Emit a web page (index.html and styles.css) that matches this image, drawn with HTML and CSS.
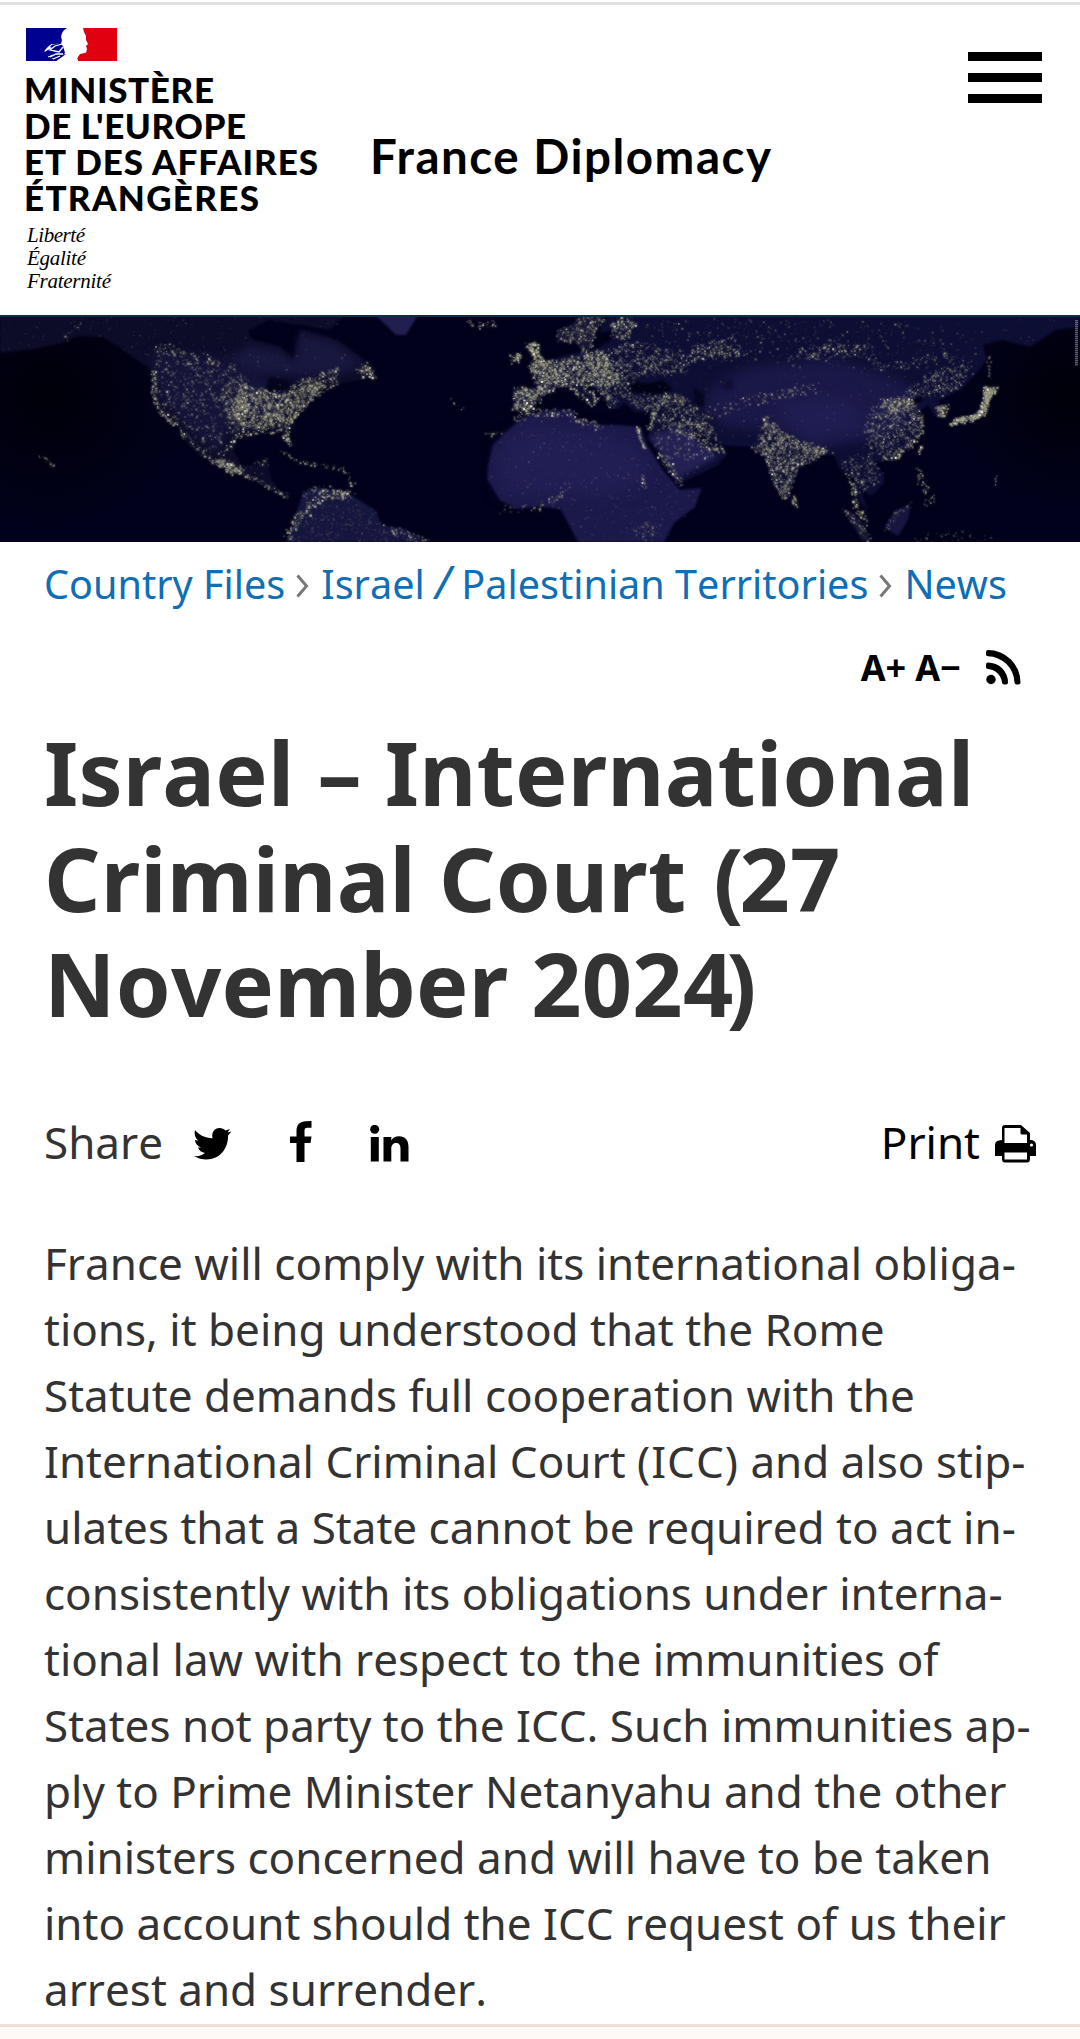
FILE: index.html
```html
<!DOCTYPE html>
<html lang="en">
<head>
    <meta charset="UTF-8">
    <meta name="viewport" content="width=device-width, initial-scale=1.0">
    <title>Israel – International Criminal Court (27 November 2024)</title>
    <link rel="stylesheet" href="styles.css">
</head>
<body>
    <header class="header">
        <svg class="logo" width="300" height="270" viewBox="0 0 300 270">
            <!-- flag -->
            <rect width="44" height="33" fill="#000091"/>
            <rect x="52" width="39" height="33" fill="#e1000f"/>
            <path fill="#fff" d="M41 0C36 3 34 8 36 12L35 16C30 15 24 16 21 20L18 24L24 21L28 19L26 23L31 24L36 21L30 26L35 27L40 26L36 29L30 33H52L51 30L55 26L60 25L61 21L60 18L62 16L60 12L60 8L58 4L57 0Z"/>
            <path fill="none" stroke="#fff" stroke-width="1" d="M20 22L26 16M22 29L27 27M26 31L33 28"/>
            <path fill="#e1000f" d="M51 31L54 26Q58 26 61 24L62 33H55Z"/>
            <path fill="#000091" d="M22 18L34 15L37 18L39 25L35 29L30 33H22L28 30L24 29L31 27L23 26L28 24L20 24L26 20Z"/>
            <path fill="none" stroke="#fff" stroke-width="1.300" d="M19 23L25 17M36 16L29 18L24 22L33 24L37 19M24 29L30 26H37M27 31L34 28"/>
            <g class="logo-name">
                <text x="-2" y="75" textLength="190">MINISTÈRE</text>
                <text x="-2" y="111" textLength="222">DE L'EUROPE</text>
                <text x="-2" y="147" textLength="294">ET DES AFFAIRES</text>
                <text x="-2" y="183" textLength="235">ÉTRANGÈRES</text>
            </g>
            <g class="logo-motto">
                <text x="1" y="214" textLength="58">Liberté</text>
                <text x="1" y="237" textLength="59">Égalité</text>
                <text x="1" y="260" textLength="84">Fraternité</text>
            </g>
        </svg>
        <svg class="site-name" width="410" height="60" viewBox="0 0 410 60">
            <text x="-2" y="45" textLength="401">France Diplomacy</text>
        </svg>
        <div class="menu">
            <span></span>
            <span></span>
            <span></span>
        </div>
    </header>

    <canvas class="banner" id="banner" width="1080" height="227"></canvas>

    <main class="content">
        <nav class="breadcrumb">
            <a>Country Files</a>
            <svg width="13" height="24" viewBox="0 0 13 24"><path d="M1.500 1.500L10.500 12L1.500 22.500"/></svg>
            <a>Israel <i>/</i> Palestinian Territories</a>
            <svg width="13" height="24" viewBox="0 0 13 24"><path d="M1.500 1.500L10.500 12L1.500 22.500"/></svg>
            <a>News</a>
        </nav>

        <div class="tools">
            <span>A+</span>
            <span>A−</span>
            <svg class="rss" width="35" height="35" viewBox="0 0 35 35">
                <circle cx="5" cy="29.500" r="4.700"/>
                <path d="M0 14.500Q0 12.500 2 12.500A20 20 0 0 1 22 32.500Q22 34.500 20 34.500H18Q16.300 34.500 16 32.500A15 15 0 0 0 2 19Q0 18.800 0 17Z"/>
                <path d="M0 2Q0 0 2 0A32.500 32.500 0 0 1 34.500 32.500Q34.500 34.500 32.500 34.500H30.500Q28.600 34.500 28.500 32.500A27 27 0 0 0 2 6.300Q0 6.200 0 4.500Z"/>
            </svg>
        </div>

        <h1>Israel – International<br>Criminal Court <span class="open">(</span>27<br>November 2024<span class="close">)</span></h1>

        <div class="share">
            <span>Share</span>
            <svg class="twitter" width="38" height="32" viewBox="0 0 38 32">
                <path d="M1 2C5 7 11 10 18.500 10.200C17.200 4.500 20.500 0 25.500 0C28 0 30 1 31.500 2.600L36 1L33.500 4.500L37.500 3.600L34 7.500C34.500 20 26 31.500 12.500 31.500C8 31.500 4 30.500 0 28C4.500 28.500 8 27.500 11 25C7.500 24.500 5 22.500 4 19.500H7C3.500 18 1.200 15.500 1 12L4.300 12.800C1 10 0 6 1 2Z"/>
            </svg>
            <svg class="facebook" width="22" height="41" viewBox="0 0 22 41">
                <path d="M21.500 0V6.800H17.500C15 6.800 14.500 8 14.500 10V15.500H21.500L20.500 22H14.500V41H6.500V22H0V15.500H6.500V10C6.500 3.500 10 .3 16 .2Z"/>
            </svg>
            <svg class="linkedin" width="39" height="37" viewBox="0 0 39 37">
                <circle cx="4.700" cy="4.300" r="4.500"/>
                <path d="M.8 12H8.800V36.500H.8ZM13.500 12H21.300V15.500C23 12.700 25.500 11.300 29 11.300C35 11.300 38.500 15 38.500 22V36.500H30.500V23.500C30.500 20 29 18 26.300 18C23.300 18 21.300 20 21.300 23.500V36.500H13.500Z"/>
            </svg>
            <a class="print">Print
                <svg width="41" height="38" viewBox="0 0 41 38">
                    <path fill-rule="evenodd" d="M7 15V3Q7 0 10 0H26L35 8V15H37Q41 16 41 20V31H35V34Q35 37.500 32 37.500H10Q7 37.500 7 34V31H0V20Q0 16 4 15.500ZM9.500 3V18H32V9.500H27Q25.500 9.500 25.500 8V3ZM9.500 27.500V34.500H32V27.500Z"/>
                    <circle cx="36.500" cy="20" r="1.600" fill="#fff"/>
                </svg>
            </a>
        </div>

        <p class="article">France will comply with its international obliga-<br>tions, it being understood that the Rome<br>Statute demands full cooperation with the<br>International Criminal Court <span class="abbr">(ICC)</span> and also stip-<br>ulates that a State cannot be required to act in-<br>consistently with its obligations under interna-<br>tional law with respect to the immunities of<br>States not party to the ICC. Such immunities ap-<br>ply to Prime Minister Netanyahu and the other<br>ministers concerned and will have to be taken<br>into account should the ICC request of us their<br>arrest and surrender.</p>
    </main>
    <footer class="footer"></footer>
    <script src="banner.js"></script>
</body>
</html>
```

FILE: styles.css
```css
body {
    margin: 0;
    height: 2039px;
    overflow: hidden;
    display: flex;
    flex-direction: column;
    background: #fff;
    color: #333;
    font-family: "Noto Sans", sans-serif;
    font-kerning: none;
}
.header {
    box-sizing: border-box;
    height: 315px;
    margin-top: 2px;
    margin-bottom: -2px;
    border-top: 3px solid #e1e1e1;
    padding: 23px 38px 0 26px;
    display: flex;
    align-items: flex-start;
}
.logo {
    overflow: visible;
}
.logo-name {
    font: 900 35px Lato, sans-serif;
}
.logo-motto {
    font: italic 21px "Liberation Serif", serif;
}
.site-name {
    margin-top: 101px;
    margin-left: 46px;
    overflow: visible;
    font: bold 47.5px Lato, sans-serif;
}
.menu {
    width: 74px;
    margin-left: auto;
    margin-top: 24px;
    display: flex;
    flex-direction: column;
    gap: 12.5px;
}
.menu span {
    height: 8.5px;
    background: #000;
}
.banner {
    display: block;
    flex: none;
    width: 1080px;
    height: 227px;
    background: #01011b;
}
.content {
    padding: 0 44px;
    height: 1482px;
    flex: none;
}
.breadcrumb {
    display: flex;
    align-items: center;
    padding-top: 12px;
    margin-bottom: 1px;
    height: 60px;
    font-size: 39.6px;
    line-height: 60px;
    white-space: nowrap;
    color: #0f6eb4;
}
.breadcrumb i {
    font-size: 45px;
    line-height: 1;
}
.breadcrumb svg {
    margin: 3px 12px 0 11px;
    fill: none;
    stroke: #777;
    stroke-width: 3;
}
.tools {
    display: flex;
    height: 105px;
    box-sizing: border-box;
    padding-top: 28px;
    justify-content: flex-end;
    font-size: 36px;
    font-weight: bold;
    line-height: 50px;
    color: #000;
}
.tools span {
    margin-right: 9px;
}
.rss {
    margin: 7px 15px 0 16px;
}
h1 {
    margin: 0;
    font-size: 88px;
    line-height: 105.6px;
    letter-spacing: 0.2px;
    white-space: nowrap;
}
h1 .open {
    margin: 0 -4px 0 4px;
}
h1 .close {
    margin-left: -7px;
}
.share {
    display: flex;
    align-items: flex-start;
    margin-top: 72px;
    font-size: 44px;
    line-height: 66px;
}
.twitter {
    margin-top: 19px;
    margin-left: 31px;
}
.facebook {
    margin-top: 12px;
    margin-left: 58px;
}
.linkedin {
    margin-top: 16px;
    margin-left: 58px;
}
.print {
    margin-left: auto;
    display: flex;
    gap: 15px;
    color: #000;
}
.print svg {
    margin-top: 16px;
}
.article {
    margin: 55px 0 0;
    font-size: 44px;
    line-height: 66px;
    white-space: nowrap;
}
.abbr {
    letter-spacing: 1px;
}
.footer {
    flex: 1;
    border-top: 3px solid #f0dfd9;
    background: #fef8f6;
}
```

FILE: banner.js
```js
// Earth at night banner
var ctx = document.getElementById('banner').getContext('2d');
var seed = 7;

function rnd() {
    seed = (seed * 16807) % 2147483647;
    return seed / 2147483647;
}

function trace(p) {
    ctx.beginPath();
    for (var i = 0; i < p.length; i += 2) ctx.lineTo(p[i], p[i + 1]);
    ctx.closePath();
}

function shape(p, color, blur) {
    ctx.filter = 'blur(' + (blur || 1.2) + 'px)';
    trace(p);
    ctx.fillStyle = color;
    ctx.fill();
    ctx.filter = 'none';
}

function dot(x, y, power) {
    var a = Math.min(1, power * (0.12 + rnd() * rnd() * 1.2));
    var s = 0.9 + rnd() * 1.3;
    // faint glow around the light
    ctx.fillStyle = 'rgba(140,140,120,' + a * 0.13 + ')';
    ctx.fillRect(x - 1.5, y - 1.5, s + 3, s + 3);
    ctx.fillStyle = 'rgba(' + (rnd() > 0.82 ? '245,245,230,' : '165,167,140,') + a + ')';
    ctx.fillRect(x, y, s, s);
}

// scatter n lights inside a polygon
function lights(p, n, power) {
    var xs = p.filter(function (v, i) { return i % 2 === 0; });
    var ys = p.filter(function (v, i) { return i % 2 === 1; });
    var x0 = Math.min.apply(null, xs), x1 = Math.max.apply(null, xs);
    var y0 = Math.min.apply(null, ys), y1 = Math.max.apply(null, ys);
    var count = 0;
    trace(p);
    for (var i = 0; i < n * 8 && count < n; i++) {
        var x = x0 + rnd() * (x1 - x0), y = y0 + rnd() * (y1 - y0);
        if (ctx.isPointInPath(x, y)) {
            dots.push([x + (rnd() - 0.5) * 4, y + (rnd() - 0.5) * 4, power]);
            count++;
        }
    }
}

// lights along a coast or a river
function line(p, step, spread, power) {
    for (var i = 0; i < p.length - 2; i += 2) {
        var dx = p[i + 2] - p[i], dy = p[i + 3] - p[i + 1];
        var n = Math.sqrt(dx * dx + dy * dy) / step;
        for (var j = 0; j < n; j++) {
            dots.push([p[i] + dx * j / n + (rnd() - 0.5) * spread, p[i + 1] + dy * j / n + (rnd() - 0.5) * spread, power]);
        }
    }
}

var dots = [];
var sea = '#01011b';

ctx.fillStyle = sea;
ctx.fillRect(0, 0, 1080, 227);
var g = ctx.createRadialGradient(50, 80, 10, 50, 80, 130);
g.addColorStop(0, '#00000a');
g.addColorStop(1, 'rgba(0,0,10,0)');
ctx.fillStyle = g;
ctx.fillRect(0, 0, 200, 227);
g = ctx.createRadialGradient(1070, 80, 10, 1070, 80, 110);
g.addColorStop(0, '#00000a');
g.addColorStop(1, 'rgba(0,0,10,0)');
ctx.fillStyle = g;
ctx.fillRect(950, 0, 130, 227);

var northAmerica = [0,0, 0,38, 35,34, 62,28, 78,21, 102,22, 119,32, 138,46, 152,55, 152,82, 165,102, 176,110, 187,128, 199,140, 211,145, 227,157, 252,163, 272,177, 286,183, 292,178, 280,176, 272,165, 269,154, 269,145, 255,150, 241,150, 234,135, 238,118, 262,115, 282,115, 288,130, 290,126, 285,111, 303,92, 308,80, 320,75, 344,68, 375,62, 375,53, 365,45, 337,25, 300,14, 297,30, 293,45, 280,32, 252,24, 248,16, 269,5, 330,15, 345,0];
var southAmerica = [303,177, 318,172, 348,178, 375,195, 382,210, 405,214, 427,227, 286,227, 293,208];
var africa = [521,104, 505,118, 493,130, 488,150, 487,164, 500,185, 517,194, 540,191, 561,195, 568,208, 578,227, 664,227, 674,208, 695,192, 702,173, 680,175, 663,155, 647,130, 641,112, 620,110, 602,110, 590,108, 574,102, 574,95, 545,95];
var eurasia = [513,73, 513,95, 527,97, 541,83, 554,73, 569,71, 586,84, 591,91, 596,83, 583,73, 581,68, 592,72, 603,82, 610,94, 619,94, 624,88, 635,97, 651,97, 650,112, 648,122, 660,139, 676,170, 698,160, 718,150, 728,138, 716,129, 702,127, 690,112, 703,122, 720,130, 750,132, 764,142, 773,170, 786,185, 793,168, 797,156, 822,140, 834,140, 840,155, 853,160, 857,180, 868,200, 865,186, 857,169, 866,178, 872,181, 884,168, 884,160, 874,148, 895,142, 914,128, 922,112, 918,98, 928,90, 936,103, 946,98, 938,86, 960,75, 975,60, 987,45, 983,30, 1002,25, 1030,32, 1056,15, 1080,12, 1080,0, 609,0, 600,14, 603,30, 596,33, 565,40, 546,46, 530,57, 542,72];
var scandinavia = [557,15, 571,10, 581,0, 605,0, 595,18, 592,32, 582,36, 575,27, 557,27];
var japan = [949,111, 956,103, 971,101, 979,95, 984,83, 984,72, 996,73, 988,83, 986,94, 979,102, 960,106];
var borneo = [884,213, 895,195, 911,190, 908,205, 898,221];
var sumatra = [842,193, 855,199, 866,216, 870,227, 862,225];

shape(northAmerica, '#0c0c29');
shape([250,30, 280,36, 295,48, 300,18, 335,28, 362,48, 340,60, 250,60, 225,45], '#18173f', 4);
shape([152,35, 235,45, 285,74, 285,98, 258,108, 228,113, 218,140, 180,105, 158,80], '#141338', 4);
shape(southAmerica, '#151640');
shape([375,0, 386,10, 396,20, 406,20, 418,0], '#201f50');
shape(africa, '#1b194a');
shape([500,130, 530,110, 600,118, 640,135, 650,165, 600,180, 500,178], '#211e54', 8);
shape(eurasia, '#0d0e33');
shape([720,65, 750,52, 830,44, 895,62, 918,80, 905,110, 880,122, 820,132, 775,115, 725,112, 700,90], '#1a1847', 6);
shape([770,90, 840,80, 870,110, 810,128], '#201d52', 8);
shape([648,122, 658,134, 676,164, 718,142, 700,128, 680,110], '#232053', 2);
shape(scandinavia, '#151534');
shape(japan, '#25264c');
shape(borneo, '#161640');
shape(sumatra, '#181838');

// inland seas
shape([628,76, 632,66, 648,69, 663,65, 673,75, 655,80], '#010216');
shape([694,72, 704,80, 704,92, 694,91], '#050621');
shape([265,75, 270,62, 285,65, 293,72, 278,76, 268,82, 264,76], '#04051c');
shape([598,18, 614,15, 609,27, 595,32], '#01021a');
shape([908,88, 925,78, 920,88], '#01021a');
shape([722,66, 732,64, 734,74, 724,76], '#0e0d33', 2);

// grain over the land
[northAmerica, southAmerica, africa, eurasia].forEach(function (p) {
    lights(p, 650, 0.14);
});

lights([157,28, 190,35, 235,48, 250,65, 240,110, 220,115, 230,155, 190,125, 165,100, 152,75], 640, 0.45);
lights([220,70, 245,60, 245,110, 228,118], 250, 0.5);
lights([240,68, 280,78, 322,66, 318,78, 305,90, 288,110, 240,114, 232,95], 1500, 0.62);
lights([287,73, 310,60, 340,52, 335,70, 315,78], 230, 0.6);
lights([355,55, 366,46, 376,60, 372,66], 60, 0.8);
lights([211,144, 225,145, 245,155, 230,158], 160, 0.75);
line([153,55, 153,82, 162,98, 176,110], 0.7, 5, 0.95);
line([155,30, 185,43, 235,58], 0.9, 14, 0.6);
line([320,76, 303,90, 286,111, 290,130, 284,123, 283,114, 240,118, 225,135], 1, 5, 0.85);
line([179,116, 211,145, 250,163, 272,173, 289,183], 1.1, 5, 0.7);
line([255,150, 267,144], 1, 5, 0.6);
line([281,137, 304,148, 330,152, 345,154, 352,166, 347,177], 1.3, 5, 0.7);
line([287,222, 300,201, 310,190, 325,178, 350,180], 0.5, 9, 0.8);
line([303,178, 324,173, 345,182], 0.7, 9, 0.55);
line([385,213, 427,227], 0.7, 9, 0.7);
line([64,23, 73,16, 81,6], 3, 6, 0.9);
line([39,140, 55,151], 1.5, 3, 0.8);
line([450,85, 464,93], 2.5, 5, 0.6);
line([483,120, 499,118], 1.6, 6, 0.7);
line([465,5, 480,10, 496,7], 0.8, 7, 0.6);

lights([513,73, 538,73, 540,86, 528,97, 513,94], 280, 0.8);
lights([524,28, 535,25, 541,43, 552,47, 535,58, 527,53, 533,43], 230, 0.9);
lights([510,39, 521,36, 520,48, 510,48], 60, 0.65);
lights([530,57, 547,46, 570,42, 600,35, 620,65, 605,72, 578,68, 555,72, 541,80], 1100, 0.75);
lights([600,35, 640,25, 690,40, 685,58, 640,60, 612,90, 598,72], 750, 0.5);
lights(scandinavia, 210, 0.6);
lights([608,7, 622,0, 638,8, 625,24, 610,20], 160, 0.65);
line([569,72, 592,90, 597,84, 582,70], 0.8, 4, 0.85);
line([593,71, 608,84, 613,92], 0.8, 7, 0.6);
line([514,106, 530,96, 573,98, 574,105, 601,111], 0.65, 8, 0.6);
lights([622,79, 680,78, 695,90, 715,118, 705,130, 660,110, 645,97], 750, 0.5);
lights([645,108, 710,110, 728,138, 690,145, 665,145, 652,130], 150, 0.5);
line([653,97, 650,114], 0.6, 3, 0.9);
line([637,112, 640,124, 644,133], 0.6, 2, 1);
line([660,138, 672,156, 680,168], 0.6, 7, 0.7);
line([706,133, 724,135], 0.7, 5, 0.8);
lights([690,30, 735,22, 745,40, 690,45], 190, 0.6);
line([800,40, 830,34, 868,36], 0.5, 13, 0.6);
line([868,42, 880,50, 910,50, 935,40, 970,50], 1.3, 9, 0.5);
line([700,100, 735,90, 770,80, 815,72], 0.8, 11, 0.5);
lights([620,5, 900,5, 980,20, 970,60, 700,45], 480, 0.35);

lights([763,103, 795,125, 828,135, 795,155, 790,180, 780,180, 770,145, 755,130], 900, 0.55);
line([762,103, 783,123, 810,133, 830,134], 0.7, 10, 0.65);
line([753,132, 766,140, 774,168, 785,184], 0.8, 5, 0.75);
lights([791,182, 797,183, 796,191, 792,191], 26, 0.7);
lights([870,90, 905,80, 923,100, 920,120, 895,142, 870,138, 862,115], 750, 0.42);
lights([880,85, 915,80, 912,95, 885,100], 190, 0.7);
lights([900,75, 935,55, 970,50, 960,73, 925,82], 210, 0.6);
line([880,143, 896,142, 922,118, 918,98], 0.8, 5, 0.8);
lights([936,90, 946,90, 946,100, 938,101], 70, 0.9);
lights(japan, 380, 1);
line([988,40, 988,62], 1.5, 4, 0.7);
line([918,138, 921,130], 0.5, 3, 1);
lights([838,145, 870,135, 880,165, 858,180], 190, 0.45);
line([852,167, 855,190, 866,208], 0.55, 6, 0.9);
line([842,193, 861,212, 869,225], 0.8, 6, 0.55);
line([918,152, 920,165, 932,185, 925,190], 0.8, 8, 0.6);
line([886,213, 897,197, 911,188], 1.1, 5, 0.45);
line([912,227, 960,218, 990,225], 1.4, 12, 0.3);
line([538,191, 561,178, 568,168], 1, 8, 0.5);
line([500,194, 540,192], 1.3, 8, 0.4);
lights([630,210, 655,207, 660,220, 640,225], 60, 0.4);
line([642,160, 644,172], 1, 4, 0.6);
line([994,168, 995,160], 1.5, 3, 0.6);

dots.forEach(function (d) {
    dot(d[0], d[1], d[2]);
});

// dark edge on top and the small vertical credit on the right
ctx.fillStyle = '#0f2d48';
ctx.fillRect(0, 0, 1080, 2);
ctx.fillStyle = 'rgba(150,155,175,0.6)';
for (var y = 5; y < 50; y += 2) ctx.fillRect(1075, y, 3, 1.4);
```
